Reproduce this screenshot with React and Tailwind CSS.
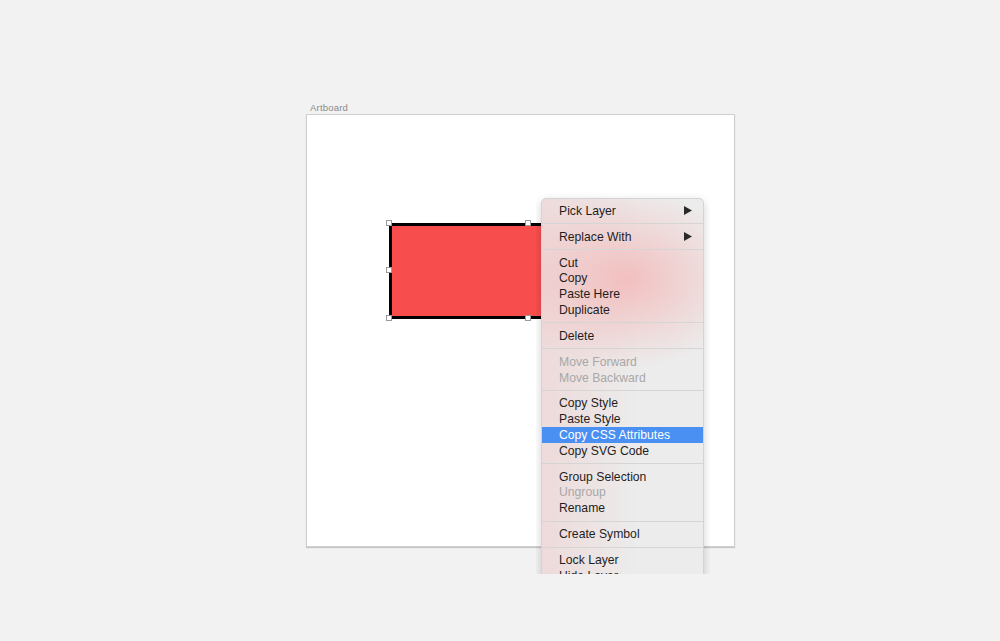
import React from 'react';

const menu = [
  [{ label: 'Pick Layer', sub: true }],
  [{ label: 'Replace With', sub: true }],
  [{ label: 'Cut' }, { label: 'Copy' }, { label: 'Paste Here' }, { label: 'Duplicate' }],
  [{ label: 'Delete' }],
  [{ label: 'Move Forward', disabled: true }, { label: 'Move Backward', disabled: true }],
  [{ label: 'Copy Style' }, { label: 'Paste Style' }, { label: 'Copy CSS Attributes', active: true }, { label: 'Copy SVG Code' }],
  [{ label: 'Group Selection' }, { label: 'Ungroup', disabled: true }, { label: 'Rename' }],
  [{ label: 'Create Symbol' }],
  [{ label: 'Lock Layer' }, { label: 'Hide Layer' }],
];

function Handle({ className }) {
  return <div className={`absolute w-[6px] h-[6px] bg-white border border-[#9a9a9a] ${className}`} />;
}

function MenuItem({ item }) {
  let color = 'text-[#1e1e1e]';
  if (item.disabled) color = 'text-[#a8a8a8]';
  if (item.active) color = 'text-white bg-[#4a8ff2]';
  return (
    <div className={`h-[15.75px] flex items-center justify-between pl-[17px] pr-[11px] text-[12.2px] leading-none ${color}`}>
      <span>{item.label}</span>
      {item.sub && (
        <svg width="8" height="9" viewBox="0 0 8 9">
          <path d="M0 0 L8 4.5 L0 9 Z" fill="#2a2a2a" />
        </svg>
      )}
    </div>
  );
}

export default function App() {
  return (
    <div className="relative w-[1000px] h-[641px] bg-[#f2f2f2] overflow-hidden" style={{ fontFamily: '"Liberation Sans", Arial, sans-serif' }}>
      <div className="absolute left-[310px] top-[101px] text-[9.5px] text-[#8a8a8a] tracking-[0.2px]">Artboard</div>

      <div className="absolute left-[306px] top-[114px] w-[429px] h-[433px] bg-white border border-[#cfcfcf] shadow-[0_1px_1px_rgba(0,0,0,0.18)]">
        <div className="absolute left-[82px] top-[108px] w-[278px] h-[96px] bg-[#f84d4d] border-[3px] border-black" />
        <Handle className="left-[79px] top-[105px]" />
        <Handle className="left-[218px] top-[105px]" />
        <Handle className="left-[79px] top-[152px]" />
        <Handle className="left-[79px] top-[200px]" />
        <Handle className="left-[218px] top-[200px]" />
      </div>

      <div className="absolute left-[536px] top-[193px] w-[174px] h-[381px] overflow-hidden">
        <div className="absolute left-[5px] top-[5px] w-[163px] rounded-[5px] border border-[#d4d4d4] shadow-[0_3px_10px_rgba(0,0,0,0.18)] bg-[#ececec] bg-[radial-gradient(ellipse_120px_90px_at_85px_80px,rgba(245,172,172,0.7),rgba(236,236,236,0)_100%),linear-gradient(to_right,rgba(240,200,200,0.5),rgba(236,236,236,0)_60%)] pt-[4px] pb-[4px]">
          {menu.map((group, gi) => (
            <div key={gi}>
              {gi > 0 && (
                <div className="h-[10.2px] flex items-center">
                  <div className="w-full h-px bg-[#d5d5d5]" />
                </div>
              )}
              {group.map((item) => (
                <MenuItem key={item.label} item={item} />
              ))}
            </div>
          ))}
        </div>
      </div>
    </div>
  );
}
